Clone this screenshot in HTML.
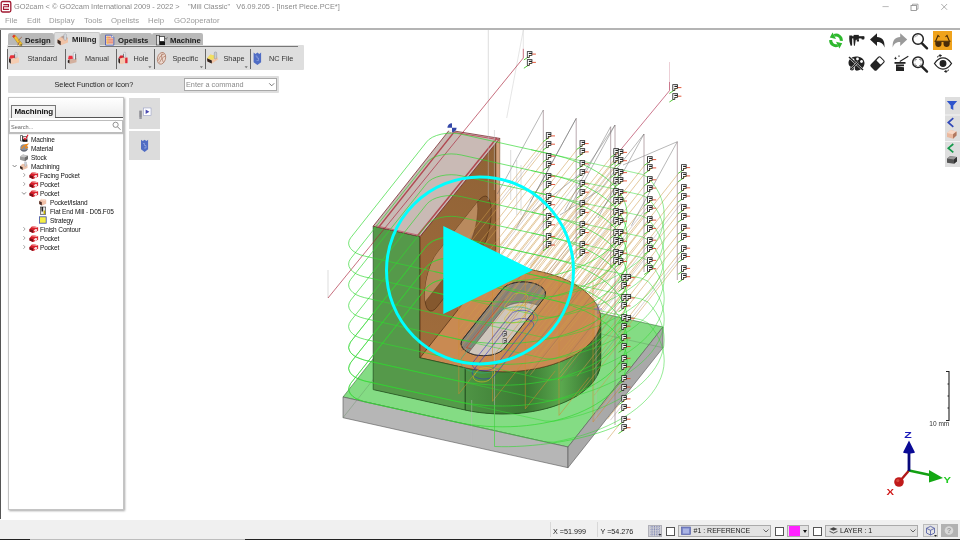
<!DOCTYPE html>
<html><head><meta charset="utf-8"><title>GO2cam</title>
<style>
*{box-sizing:border-box;margin:0;padding:0}
html,body{width:960px;height:540px;overflow:hidden;background:#fff;font-family:"Liberation Sans","DejaVu Sans",sans-serif;}
.abs{position:absolute}
#title{position:absolute;left:14px;top:2px;font-size:7.4px;color:#8a8a8a;white-space:pre;letter-spacing:0px}
#menu span{position:absolute;top:16px;font-size:7.8px;color:#9a9a9a}
#topline{position:absolute;left:0;top:28px;width:960px;height:2px;background:#b4b4b4}
#leftline{position:absolute;left:0;top:30px;width:1px;height:489px;background:#555}
.tab{position:absolute;top:33px;height:13px;background:#b9b9b9;font-weight:bold;font-size:7.7px;color:#1a1a1a;border-radius:2px 2px 0 0}
.tab b{position:absolute;top:3px;font-weight:bold}
#toolbar{position:absolute;left:7px;top:44.5px;width:297px;height:25.5px;background:#dedede;border-radius:1px}
.tsep{position:absolute;top:49px;width:1px;height:20px;background:#666}
.tl{position:absolute;top:54.2px;font-size:7.3px;color:#333}
#prompt{position:absolute;left:8px;top:75.5px;width:271px;height:17.5px;background:#dedede;border-radius:1px}
#cmd{position:absolute;left:183.5px;top:77.5px;width:93px;height:13px;background:#fff;border:1px solid #a8a8a8}
.f text{font:bold 7.4px "Liberation Sans",sans-serif;fill:#fff;stroke:#222;stroke-width:1.7px;paint-order:stroke;stroke-linejoin:miter}

#panel{position:absolute;left:8px;top:97px;width:116px;height:413px;background:#fff;border:1px solid #c4c4c4;box-shadow:1px 1px 2px rgba(0,0,0,.35)}
#phead{position:absolute;left:9px;top:98px;width:114px;height:20px;background:linear-gradient(#fff,#ececec)}
#ptab{position:absolute;left:11px;top:105px;width:45px;height:13px;border:1px solid #777;border-bottom:none;background:#f2f2f2;font-weight:bold;font-size:8px;color:#111;padding:.7px 0 0 2.5px;letter-spacing:-.1px}
#pline{position:absolute;left:55px;top:117px;width:68px;height:1px;background:#555}
#search{position:absolute;left:9px;top:119.5px;width:114px;height:13.5px;border:1px solid #bdbdbd;background:#fff;box-shadow:0 1px 1px rgba(0,0,0,.25)}
#search span{position:absolute;left:1px;top:3px;font-size:5.6px;color:#666}
.ti{position:absolute;font-size:6.5px;letter-spacing:-.12px;color:#111;white-space:nowrap;line-height:9px;height:9px;margin-top:.5px}
.ar{position:absolute;font-size:6px;color:#666}
.sbtn{position:absolute;left:129px;width:31px;background:#dcdcdc}
.st{position:absolute;top:527px;font-size:7.2px;color:#222;white-space:nowrap}
.cb{position:absolute;top:526.5px;width:9px;height:9px;background:#fff;border:1px solid #555}
.combo{position:absolute;top:524.5px;height:12px;background:#e2e2e2;border:1px solid #aaa}
#rside{position:absolute;left:945px;top:97px;width:15px;height:70px;background:#dedede}
#status{position:absolute;left:0;top:520px;width:960px;height:19px;background:#f0f0f0}
</style></head><body><div id="wrap" style="position:absolute;left:0;top:0;width:960px;height:540px;will-change:transform">
<div id="title">GO2cam &lt; © GO2cam International 2009 - 2022 &gt;    "Mill Classic"   V6.09.205 - [Insert Piece.PCE*]</div>
<div id="menu"><span style="left:5px">File</span><span style="left:27px">Edit</span><span style="left:49px">Display</span><span style="left:84px">Tools</span><span style="left:111px">Opelists</span><span style="left:148px">Help</span><span style="left:174px">GO2operator</span></div>
<div id="topline"></div><div id="leftline"></div>
<div class="tab" style="left:8px;width:46px"><b style="left:17px">Design</b></div>
<div class="tab" style="left:54px;width:45.5px;top:32px;height:15px;background:#dedede;z-index:3;border:1px solid #c9c9c9;border-bottom:none"><b style="left:17px;top:2.2px">Milling</b></div>
<div class="tab" style="left:100px;width:52px"><b style="left:18px">Opelists</b></div>
<div class="tab" style="left:152px;width:51px"><b style="left:18px">Machine</b></div>
<div id="toolbar"></div>
<div id="prompt"></div><div id="cmd"></div><div class="tl" style="left:27.500px">Standard</div><div class="tl" style="left:85px">Manual</div><div class="tl" style="left:133.500px">Hole</div><div class="tl" style="left:172.500px">Specific</div><div class="tl" style="left:223.500px">Shape</div><div class="tl" style="left:269px">NC File</div><div class="tl" style="left:54.500px;top:79.800px;color:#222">Select Function or Icon?</div><div class="tl" style="left:186px;top:79.800px;color:#8a8a8a;font-size:7.300px">Enter a command</div><div class="tsep" style="left:7.0px"></div><div class="tsep" style="left:65.0px"></div><div class="tsep" style="left:115.8px"></div><div class="tsep" style="left:153.8px"></div><div class="tsep" style="left:204.8px"></div><div class="tsep" style="left:249.9px"></div><div class="abs" style="left:8px;top:46px;width:290px;height:1px;background:#777"></div>
<div id="panel"></div><div id="phead"></div><div id="ptab">Machining</div><div id="pline"></div><div id="search"><span>Search...</span></div>
<div class="ti" style="left:31px;top:134.5px">Machine</div><div class="ti" style="left:31px;top:143.5px">Material</div><div class="ti" style="left:31px;top:152.5px">Stock</div><div class="ti" style="left:31px;top:161.5px">Machining</div><div class="ti" style="left:40px;top:170.5px">Facing Pocket</div><div class="ti" style="left:40px;top:179.5px">Pocket</div><div class="ti" style="left:40px;top:188.5px">Pocket</div><div class="ti" style="left:50px;top:197.5px">Pocket/Island</div><div class="ti" style="left:50px;top:206.5px">Flat End Mill - D05.F05</div><div class="ti" style="left:50px;top:215.5px">Strategy</div><div class="ti" style="left:40px;top:224.5px">Finish Contour</div><div class="ti" style="left:40px;top:233.5px">Pocket</div><div class="ti" style="left:40px;top:242.5px">Pocket</div>
<div class="sbtn" style="top:98px;height:30.5px"></div><div class="sbtn" style="top:130.5px;height:29.5px"></div>
<div id="rside"></div>
<svg id="scene" class="abs" style="left:0;top:0" width="960" height="540" viewBox="0 0 960 540">
<polygon points="438.0,277.0 343.0,397.0 568.0,447.0 663.0,327.0" fill="#84dc84" stroke="#3c6e3c" stroke-width="0.6" />
<polygon points="343.0,397.0 568.0,447.0 568.0,467.7 343.0,417.7" fill="#b6b6b6" stroke="#555" stroke-width="0.6" />
<polygon points="568.0,447.0 663.0,327.0 663.0,347.7 568.0,467.7" fill="#a9a9a9" stroke="#555" stroke-width="0.6" />
<path d="M343.0 417.7 L438.0 297.7 L663.0 347.7" fill="none" stroke="#5c8a5c" stroke-width="0.5" stroke-opacity="0.7" />
<path d="M438.0 297.7 L438.0 277.0" fill="none" stroke="#5c8a5c" stroke-width="0.5" stroke-opacity="0.7" />
<g fill="#3f8236" stroke="none">
<polygon points="465.0,410.0 472.2,411.4 479.5,412.5 487.1,413.3 494.7,413.8 502.3,414.0 510.0,413.8 517.6,413.4 525.2,412.6 532.6,411.5 539.8,410.1 546.8,408.4 553.5,406.4 559.9,404.1 565.9,401.6 571.6,398.8 576.9,395.9 581.6,392.7 585.9,389.3 589.7,385.7 593.0,382.0 595.7,378.2 597.8,374.2 599.4,370.2 600.3,366.2 600.7,362.1 600.4,358.0 599.6,354.0 598.1,350.0 596.1,346.0 593.5,342.2 590.3,338.5 586.6,334.9 582.4,331.5 577.7,328.3 572.5,325.3 567.0,322.5 561.0,320.0 554.6,317.7 547.9,315.7 541.0,314.0 451.0,294.0 375.0,390.0" fill="#3f8236" stroke="none" stroke-width="0.6" />
<polygon points="465.0,410.0 472.2,411.4 472.2,369.2 465.0,367.8" fill="#3f8236" stroke="#3f8236" stroke-width="0.4" />
<polygon points="472.2,411.4 479.5,412.5 479.5,370.4 472.2,369.2" fill="#3f8236" stroke="#3f8236" stroke-width="0.4" />
<polygon points="479.5,412.5 487.1,413.3 487.1,371.2 479.5,370.4" fill="#3f8236" stroke="#3f8236" stroke-width="0.4" />
<polygon points="487.1,413.3 494.7,413.8 494.7,371.6 487.1,371.2" fill="#3f8236" stroke="#3f8236" stroke-width="0.4" />
<polygon points="494.7,413.8 502.3,414.0 502.3,371.8 494.7,371.6" fill="#3f8236" stroke="#3f8236" stroke-width="0.4" />
<polygon points="502.3,414.0 510.0,413.8 510.0,371.7 502.3,371.8" fill="#3f8236" stroke="#3f8236" stroke-width="0.4" />
<polygon points="510.0,413.8 517.6,413.4 517.6,371.2 510.0,371.7" fill="#3f8236" stroke="#3f8236" stroke-width="0.4" />
<polygon points="517.6,413.4 525.2,412.6 525.2,370.4 517.6,371.2" fill="#3f8236" stroke="#3f8236" stroke-width="0.4" />
<polygon points="525.2,412.6 532.6,411.5 532.6,369.3 525.2,370.4" fill="#3f8236" stroke="#3f8236" stroke-width="0.4" />
<polygon points="532.6,411.5 539.8,410.1 539.8,367.9 532.6,369.3" fill="#3f8236" stroke="#3f8236" stroke-width="0.4" />
<polygon points="539.8,410.1 546.8,408.4 546.8,366.2 539.8,367.9" fill="#3f8236" stroke="#3f8236" stroke-width="0.4" />
<polygon points="546.8,408.4 553.5,406.4 553.5,364.2 546.8,366.2" fill="#3f8236" stroke="#3f8236" stroke-width="0.4" />
<polygon points="553.5,406.4 559.9,404.1 559.9,361.9 553.5,364.2" fill="#3f8236" stroke="#3f8236" stroke-width="0.4" />
<polygon points="559.9,404.1 565.9,401.6 565.9,359.4 559.9,361.9" fill="#3f8236" stroke="#3f8236" stroke-width="0.4" />
<polygon points="565.9,401.6 571.6,398.8 571.6,356.7 565.9,359.4" fill="#3f8236" stroke="#3f8236" stroke-width="0.4" />
<polygon points="571.6,398.8 576.9,395.9 576.9,353.7 571.6,356.7" fill="#3f8236" stroke="#3f8236" stroke-width="0.4" />
<polygon points="576.9,395.9 581.6,392.7 581.6,350.5 576.9,353.7" fill="#3f8236" stroke="#3f8236" stroke-width="0.4" />
<polygon points="581.6,392.7 585.9,389.3 585.9,347.1 581.6,350.5" fill="#3f8236" stroke="#3f8236" stroke-width="0.4" />
<polygon points="585.9,389.3 589.7,385.7 589.7,343.5 585.9,347.1" fill="#3f8236" stroke="#3f8236" stroke-width="0.4" />
<polygon points="589.7,385.7 593.0,382.0 593.0,339.8 589.7,343.5" fill="#3f8236" stroke="#3f8236" stroke-width="0.4" />
<polygon points="593.0,382.0 595.7,378.2 595.7,336.0 593.0,339.8" fill="#3f8236" stroke="#3f8236" stroke-width="0.4" />
<polygon points="595.7,378.2 597.8,374.2 597.8,332.1 595.7,336.0" fill="#3f8236" stroke="#3f8236" stroke-width="0.4" />
<polygon points="597.8,374.2 599.4,370.2 599.4,328.1 597.8,332.1" fill="#3f8236" stroke="#3f8236" stroke-width="0.4" />
<polygon points="599.4,370.2 600.3,366.2 600.3,324.0 599.4,328.1" fill="#3f8236" stroke="#3f8236" stroke-width="0.4" />
<polygon points="600.3,366.2 600.7,362.1 600.7,319.9 600.3,324.0" fill="#3f8236" stroke="#3f8236" stroke-width="0.4" />
<polygon points="600.7,362.1 600.4,358.0 600.4,315.8 600.7,319.9" fill="#3f8236" stroke="#3f8236" stroke-width="0.4" />
<polygon points="600.4,358.0 599.6,354.0 599.6,311.8 600.4,315.8" fill="#3f8236" stroke="#3f8236" stroke-width="0.4" />
<polygon points="599.6,354.0 598.1,350.0 598.1,307.8 599.6,311.8" fill="#3f8236" stroke="#3f8236" stroke-width="0.4" />
<polygon points="598.1,350.0 596.1,346.0 596.1,303.8 598.1,307.8" fill="#3f8236" stroke="#3f8236" stroke-width="0.4" />
<polygon points="596.1,346.0 593.5,342.2 593.5,300.0 596.1,303.8" fill="#3f8236" stroke="#3f8236" stroke-width="0.4" />
<polygon points="593.5,342.2 590.3,338.5 590.3,296.3 593.5,300.0" fill="#3f8236" stroke="#3f8236" stroke-width="0.4" />
<polygon points="590.3,338.5 586.6,334.9 586.6,292.7 590.3,296.3" fill="#3f8236" stroke="#3f8236" stroke-width="0.4" />
<polygon points="586.6,334.9 582.4,331.5 582.4,289.3 586.6,292.7" fill="#3f8236" stroke="#3f8236" stroke-width="0.4" />
<polygon points="582.4,331.5 577.7,328.3 577.7,286.1 582.4,289.3" fill="#3f8236" stroke="#3f8236" stroke-width="0.4" />
<polygon points="577.7,328.3 572.5,325.3 572.5,283.1 577.7,286.1" fill="#3f8236" stroke="#3f8236" stroke-width="0.4" />
<polygon points="572.5,325.3 567.0,322.5 567.0,280.3 572.5,283.1" fill="#3f8236" stroke="#3f8236" stroke-width="0.4" />
<polygon points="567.0,322.5 561.0,320.0 561.0,277.8 567.0,280.3" fill="#3f8236" stroke="#3f8236" stroke-width="0.4" />
<polygon points="561.0,320.0 554.6,317.7 554.6,275.5 561.0,277.8" fill="#3f8236" stroke="#3f8236" stroke-width="0.4" />
<polygon points="554.6,317.7 547.9,315.7 547.9,273.5 554.6,275.5" fill="#3f8236" stroke="#3f8236" stroke-width="0.4" />
<polygon points="547.9,315.7 541.0,314.0 541.0,271.8 547.9,273.5" fill="#3f8236" stroke="#3f8236" stroke-width="0.4" />
<polygon points="541.0,314.0 451.0,294.0 451.0,251.8 541.0,271.8" fill="#3f8236" stroke="#3f8236" stroke-width="0.4" />
<polygon points="451.0,294.0 375.0,390.0 375.0,347.8 451.0,251.8" fill="#3f8236" stroke="#3f8236" stroke-width="0.4" />
</g>
<polygon points="375.0,390.0 465.0,410.0 465.0,367.8 375.0,347.8" fill="#55994a" stroke="none" stroke-width="0.6" />
<defs><linearGradient id="cyl" gradientUnits="userSpaceOnUse" x1="465" y1="0" x2="603" y2="0"><stop offset="0" stop-color="#4f9445"/><stop offset="0.45" stop-color="#3a7a32"/><stop offset="0.7" stop-color="#5aa84e"/><stop offset="1" stop-color="#2f6a2a"/></linearGradient></defs>
<polygon points="465.0,367.8 472.2,369.2 479.5,370.4 487.1,371.2 494.7,371.6 502.3,371.8 510.0,371.7 517.6,371.2 525.2,370.4 532.6,369.3 539.8,367.9 546.8,366.2 553.5,364.2 559.9,361.9 565.9,359.4 571.6,356.7 576.9,353.7 581.6,350.5 585.9,347.1 589.7,343.5 593.0,339.8 595.7,336.0 597.8,332.1 599.4,328.1 600.3,324.0 600.7,319.9 600.7,362.1 600.3,366.2 599.4,370.2 597.8,374.2 595.7,378.2 593.0,382.0 589.7,385.7 585.9,389.3 581.6,392.7 576.9,395.9 571.6,398.8 565.9,401.6 559.9,404.1 553.5,406.4 546.8,408.4 539.8,410.1 532.6,411.5 525.2,412.6 517.6,413.4 510.0,413.8 502.3,414.0 494.7,413.8 487.1,413.3 479.5,412.5 472.2,411.4 465.0,410.0" fill="url(#cyl)" stroke="#1f4a1c" stroke-width="0.7" />
<path d="M465.0 410.0 L465.0 367.8" fill="none" stroke="#1f4a1c" stroke-width="0.7" />
<polygon points="465.0,367.8 472.2,369.2 479.5,370.4 487.1,371.2 494.7,371.6 502.3,371.8 510.0,371.7 517.6,371.2 525.2,370.4 532.6,369.3 539.8,367.9 546.8,366.2 553.5,364.2 559.9,361.9 565.9,359.4 571.6,356.7 576.9,353.7 581.6,350.5 585.9,347.1 589.7,343.5 593.0,339.8 595.7,336.0 597.8,332.1 599.4,328.1 600.3,324.0 600.7,319.9 600.4,315.8 599.6,311.8 598.1,307.8 596.1,303.8 593.5,300.0 590.3,296.3 586.6,292.7 582.4,289.3 577.7,286.1 572.5,283.1 567.0,280.3 561.0,277.8 554.6,275.5 547.9,273.5 541.0,271.8 451.0,251.8 375.0,347.8" fill="#c98a52" stroke="#5a3a1a" stroke-width="0.7" />
<clipPath id="slotclip"><polygon points="462.9,339.1 461.5,341.4 461.1,343.7 461.5,346.0 462.7,348.3 464.8,350.3 467.6,352.2 470.9,353.6 474.8,354.8 479.0,355.4 483.4,355.7 487.8,355.4 492.0,354.8 495.9,353.7 499.3,352.2 502.1,350.4 504.2,348.3 543.8,298.4 545.1,296.2 545.5,293.8 545.1,291.5 543.9,289.2 541.8,287.2 539.1,285.4 535.7,283.9 531.8,282.8 527.6,282.1 523.2,281.8 518.8,282.1 514.6,282.7 510.7,283.8 507.3,285.3 504.5,287.1 502.4,289.2"/></clipPath>
<polygon points="462.9,339.1 461.5,341.4 461.1,343.7 461.5,346.0 462.7,348.3 464.8,350.3 467.6,352.2 470.9,353.6 474.8,354.8 479.0,355.4 483.4,355.7 487.8,355.4 492.0,354.8 495.9,353.7 499.3,352.2 502.1,350.4 504.2,348.3 543.8,298.4 545.1,296.2 545.5,293.8 545.1,291.5 543.9,289.2 541.8,287.2 539.1,285.4 535.7,283.9 531.8,282.8 527.6,282.1 523.2,281.8 518.8,282.1 514.6,282.7 510.7,283.8 507.3,285.3 504.5,287.1 502.4,289.2" fill="#8c8478" stroke="#333" stroke-width="0.8" />
<g clip-path="url(#slotclip)">
<polygon points="462.9,359.8 461.5,362.0 461.1,364.4 461.5,366.7 462.7,368.9 464.8,371.0 467.6,372.8 470.9,374.3 474.8,375.4 479.0,376.1 483.4,376.4 487.8,376.1 492.0,375.5 495.9,374.4 499.3,372.9 502.1,371.1 504.2,369.0 543.8,319.1 545.1,316.8 545.5,314.5 545.1,312.2 543.9,309.9 541.8,307.8 539.1,306.0 535.7,304.5 531.8,303.4 527.6,302.7 523.2,302.5 518.8,302.7 514.6,303.4 510.7,304.5 507.3,306.0 504.5,307.8 502.4,309.9" fill="#cfc6bc" stroke="#555" stroke-width="0.6" />
</g>
<polygon points="462.9,339.1 461.5,341.4 461.1,343.7 461.5,346.0 462.7,348.3 464.8,350.3 467.6,352.2 470.9,353.6 474.8,354.8 479.0,355.4 483.4,355.7 487.8,355.4 492.0,354.8 495.9,353.7 499.3,352.2 502.1,350.4 504.2,348.3 543.8,298.4 545.1,296.2 545.5,293.8 545.1,291.5 543.9,289.2 541.8,287.2 539.1,285.4 535.7,283.9 531.8,282.8 527.6,282.1 523.2,281.8 518.8,282.1 514.6,282.7 510.7,283.8 507.3,285.3 504.5,287.1 502.4,289.2" fill="none" stroke="#2a2a2a" stroke-width="0.9" />
<polygon points="373.2,389.6 465.0,410.0 465.0,367.8 420.0,357.8 420.0,236.6 373.2,226.2" fill="#55994a" stroke="#1f4a1c" stroke-width="0.7" />
<defs><linearGradient id="wallg" gradientUnits="userSpaceOnUse" x1="500" y1="140" x2="420" y2="350"><stop offset="0" stop-color="#8f6236"/><stop offset="1" stop-color="#a06c3c"/></linearGradient></defs>
<polygon points="420.0,357.8 496.0,261.8 496.0,140.6 420.0,236.6" fill="url(#wallg)" stroke="#4a2a10" stroke-width="0.7" />
<clipPath id="pkclip"><polygon points="437.1,306.8 434.7,309.4 432.4,310.8 430.2,311.0 428.4,310.0 426.8,307.9 425.7,304.7 425.0,300.5 424.8,295.6 425.0,290.0 425.7,284.1 426.8,278.0 428.4,272.0 430.2,266.3 432.4,261.1 434.7,256.6 437.1,253.1 478.9,200.3 481.3,197.8 483.6,196.4 485.8,196.1 487.6,197.1 489.2,199.3 490.3,202.5 491.0,206.6 491.2,211.6 491.0,217.1 490.3,223.0 489.2,229.1 487.6,235.1 485.8,240.8 483.6,246.0 481.3,250.5 478.9,254.0"/></clipPath>
<polygon points="437.1,306.8 434.7,309.4 432.4,310.8 430.2,311.0 428.4,310.0 426.8,307.9 425.7,304.7 425.0,300.5 424.8,295.6 425.0,290.0 425.7,284.1 426.8,278.0 428.4,272.0 430.2,266.3 432.4,261.1 434.7,256.6 437.1,253.1 478.9,200.3 481.3,197.8 483.6,196.4 485.8,196.1 487.6,197.1 489.2,199.3 490.3,202.5 491.0,206.6 491.2,211.6 491.0,217.1 490.3,223.0 489.2,229.1 487.6,235.1 485.8,240.8 483.6,246.0 481.3,250.5 478.9,254.0" fill="#85582e" stroke="#4a2a10" stroke-width="0.6" />
<g clip-path="url(#pkclip)"><polygon points="423.6,303.8 421.2,306.4 418.9,307.8 416.7,308.0 414.9,307.0 413.3,304.9 412.2,301.7 411.5,297.5 411.2,292.6 411.5,287.0 412.2,281.1 413.3,275.0 414.9,269.0 416.7,263.3 418.9,258.1 421.2,253.6 423.6,250.1 465.4,197.3 467.8,194.8 470.1,193.4 472.3,193.1 474.1,194.1 475.7,196.3 476.8,199.5 477.5,203.6 477.8,208.6 477.5,214.1 476.8,220.0 475.7,226.1 474.1,232.1 472.3,237.8 470.1,243.0 467.8,247.5 465.4,251.0" fill="#b98a5e" stroke="#6a4020" stroke-width="0.5" /></g>
<polygon points="496.0,261.8 499.5,260.8 499.8,138.4 496.0,140.6" fill="#d3a27e" stroke="#6a4020" stroke-width="0.5" />
<polygon points="373.2,226.2 420.0,236.6 499.8,138.4 449.2,130.2" fill="#c9bab5" stroke="#7a2a30" stroke-width="0.8" />
<path d="M378.6 227.4 L454.6 131.4" fill="none" stroke="#b04850" stroke-width="1.5" />
<path d="M417.3 236.0 L496.8 138.0" fill="none" stroke="#b04850" stroke-width="1.5" />
<path d="M450.1 131.8 L498.7 139.7" fill="none" stroke="#c05868" stroke-width="1.0" />
<path d="M375.8 225.7 L420.8 235.7" fill="none" stroke="#c05868" stroke-width="0.8" />
<path d="M543.3 141.8 l-84.9 107.3 M543.3 150.1 l-84.9 107.3 M543.3 162.0 l-84.9 107.3 M543.3 170.3 l-84.9 107.3 M543.3 182.1 l-84.9 107.3 M543.3 190.4 l-84.9 107.3 M543.3 202.2 l-84.9 107.3 M543.3 210.6 l-84.9 107.3 M543.3 222.4 l-84.9 107.3 M543.3 230.7 l-84.9 107.3 M543.3 242.6 l-84.9 107.3 M543.3 250.9 l-84.9 107.3 M577.0 149.5 l-84.9 107.3 M577.0 157.8 l-84.9 107.3 M577.0 169.7 l-84.9 107.3 M577.0 178.0 l-84.9 107.3 M577.0 189.8 l-84.9 107.3 M577.0 198.1 l-84.9 107.3 M577.0 209.9 l-84.9 107.3 M577.0 218.2 l-84.9 107.3 M577.0 230.1 l-84.9 107.3 M577.0 238.4 l-84.9 107.3 M577.0 250.2 l-84.9 107.3 M577.0 258.6 l-84.9 107.3 M610.8 157.5 l-84.9 107.3 M610.8 165.8 l-84.9 107.3 M610.8 177.7 l-84.9 107.3 M610.8 186.0 l-84.9 107.3 M610.8 197.8 l-84.9 107.3 M610.8 206.1 l-84.9 107.3 M610.8 217.9 l-84.9 107.3 M610.8 226.2 l-84.9 107.3 M610.8 238.1 l-84.9 107.3 M610.8 246.4 l-84.9 107.3 M610.8 258.2 l-84.9 107.3 M610.8 266.6 l-84.9 107.3 M644.5 165.5 l-84.9 107.3 M644.5 173.8 l-84.9 107.3 M644.5 185.7 l-84.9 107.3 M644.5 194.0 l-84.9 107.3 M644.5 205.8 l-84.9 107.3 M644.5 214.1 l-84.9 107.3 M644.5 225.9 l-84.9 107.3 M644.5 234.2 l-84.9 107.3 M644.5 246.1 l-84.9 107.3 M644.5 254.4 l-84.9 107.3 M644.5 266.2 l-84.9 107.3 M678.4 173.5 l-84.9 107.3 M678.4 181.8 l-84.9 107.3 M678.4 193.7 l-84.9 107.3 M678.4 202.0 l-84.9 107.3 M678.4 213.8 l-84.9 107.3 M678.4 222.1 l-84.9 107.3 M678.4 233.9 l-84.9 107.3 M678.4 242.2 l-84.9 107.3 M678.4 254.1 l-84.9 107.3 M678.4 262.4 l-84.9 107.3 M615.3 158.3 l-84.9 107.3 M615.3 166.6 l-84.9 107.3 M615.3 178.5 l-84.9 107.3 M615.3 186.8 l-84.9 107.3 M615.3 198.6 l-84.9 107.3 M615.3 206.9 l-84.9 107.3 M615.3 218.8 l-84.9 107.3 M615.3 227.0 l-84.9 107.3 M615.3 238.9 l-84.9 107.3 M615.3 247.2 l-84.9 107.3 M615.3 259.1 l-84.9 107.3 M615.3 267.4 l-84.9 107.3 M618.8 283.0 l-60.8 76.8 M618.8 303.3 l-60.8 76.8 M618.8 323.6 l-41.8 52.8 M618.8 343.9 l-41.8 52.8 M618.8 364.2 l-24.7 31.2 M618.8 384.5 l-24.7 31.2 M618.8 404.8 l-11.4 14.4 M618.8 425.1 l-11.4 14.4" fill="none" stroke="#cc9a4a" stroke-width="0.6" stroke-opacity="0.9"/>
<path d="M458.8 253.8 V393.8 l30 -38 M492.5 261.3 V401.3 l30 -38 M525.3 268.8 V408.8 l30 -38 M559.0 275.4 V415.4 l30 -38 M593.0 282.0 V422.0 l30 -38" fill="none" stroke="#d08a30" stroke-width="0.6" stroke-opacity="0.9"/>
<path d="M543.3 141.8 l-84.9 107.3 M543.3 190.4 l-84.9 107.3 M543.3 242.6 l-84.9 107.3 M577.0 178.0 l-84.9 107.3 M577.0 230.1 l-84.9 107.3 M610.8 165.8 l-84.9 107.3 M610.8 217.9 l-84.9 107.3 M610.8 266.6 l-84.9 107.3 M644.5 205.8 l-84.9 107.3 M644.5 254.4 l-84.9 107.3 M678.4 202.0 l-84.9 107.3 M678.4 254.1 l-84.9 107.3 M615.3 186.8 l-84.9 107.3 M615.3 238.9 l-84.9 107.3 M618.8 303.3 l-60.8 76.8 M618.8 404.8 l-11.4 14.4" fill="none" stroke="#7a5a5a" stroke-width="0.5" stroke-opacity="0.55" transform="translate(3,1)"/>
<path d="M543.3 250.0 V110.0 M576.2 258.0 V118.4 M610.7 268.0 V126.7 M615.0 425.0 V125.0 M644.0 272.0 V134.0 M677.3 280.0 V141.7" fill="none" stroke="#8a7078" stroke-width="0.7" stroke-opacity="0.85"/>
<path d="M543.3 110.0 l-46 84 M576.2 118.4 l-46 84 M610.7 126.7 l-46 84 M615.0 125.0 l-46 84 M644.0 134.0 l-46 84 M677.3 141.7 l-46 84 M677.3 141.7 L623 165 M644 134 L600 190 L560 215 M615 125 L585 170 L532 212 M576.2 118.4 l-60 110" fill="none" stroke="#666" stroke-width="0.55" stroke-opacity="0.85"/>
<path d="M488.3 30V200 M494.4 130V190 M510.7 150V200 M516.7 160V215 M521 165V215 M328 270V298 M471.7 400V443 M494.5 330V447 M596 300V420" fill="none" stroke="#bbb" stroke-width="0.5"/>
<path d="M523.3 30V48.8M523.3 30L506.7 118" fill="none" stroke="#ccc" stroke-width="0.5"/><path d="M523.3 48.8 V58 L328 298" fill="none" stroke="#a82038" stroke-width="0.65"/>
<path d="M669.5 62V82" fill="none" stroke="#e0b0bc" stroke-width="0.6"/><path d="M669.5 82 V90.7 L615 156.6" fill="none" stroke="#b03050" stroke-width="0.65"/>
<path d="M454.7 276.1 L462.3 277.7 L470.1 278.9 L478.0 279.9 L486.0 280.6 L494.0 281.1 L502.2 281.2 L510.3 281.1 L518.4 280.7 L526.4 280.0 L534.3 279.0 L542.1 277.8 L549.7 276.2 L557.1 274.5 L564.3 272.4 L571.2 270.2 L577.9 267.6 L584.2 264.9 L590.1 262.0 L595.7 258.8 L600.9 255.5 L605.7 252.0 L610.0 248.3 L613.9 244.5 L617.3 240.6 L620.2 236.5 L622.6 232.4 L624.5 228.2 L625.9 223.9 L626.7 219.6 L627.1 215.3 L626.9 211.0 L626.1 206.7 L624.8 202.4 L623.1 198.2 L620.8 194.1 L617.9 190.0 L614.6 186.1 L610.9 182.3 L606.6 178.6 L601.9 175.1 L596.8 171.7 L591.3 168.6 L585.4 165.6 L579.2 162.9 L572.6 160.3 L565.8 158.0 L558.6 156.0 L551.3 154.2 L461.3 134.2 L456.3 133.4 L451.2 133.1 L446.0 133.4 L441.1 134.2 L436.5 135.5 L432.5 137.2 L429.2 139.3 L426.7 141.8 L350.7 237.8 L349.2 240.4 L348.6 243.1 L349.1 245.9 L350.6 248.5 L353.0 250.9 L356.2 253.1 L360.2 254.8 L364.7 256.1 Z M454.7 296.9 L462.3 298.5 L470.1 299.7 L478.0 300.7 L486.0 301.4 L494.0 301.9 L502.2 302.0 L510.3 301.9 L518.4 301.5 L526.4 300.8 L534.3 299.8 L542.1 298.6 L549.7 297.0 L557.1 295.3 L564.3 293.2 L571.2 291.0 L577.9 288.5 L584.2 285.7 L590.1 282.8 L595.7 279.6 L600.9 276.3 L605.7 272.8 L610.0 269.1 L613.9 265.3 L617.3 261.4 L620.2 257.3 L622.6 253.2 L624.5 249.0 L625.9 244.7 L626.7 240.4 L627.1 236.1 L626.9 231.8 L626.1 227.5 L624.8 223.2 L623.1 219.0 L620.8 214.9 L617.9 210.8 L614.6 206.9 L610.9 203.1 L606.6 199.4 L601.9 195.9 L596.8 192.5 L591.3 189.4 L585.4 186.4 L579.2 183.7 L572.6 181.1 L565.8 178.9 L558.6 176.8 L551.3 175.0 L461.3 155.0 L456.3 154.2 L451.2 153.9 L446.0 154.2 L441.1 155.0 L436.5 156.3 L432.5 158.0 L429.2 160.2 L426.7 162.6 L350.7 258.6 L349.2 261.2 L348.6 263.9 L349.1 266.7 L350.6 269.3 L353.0 271.8 L356.2 273.9 L360.2 275.6 L364.7 276.9 Z M454.7 317.7 L462.3 319.3 L470.1 320.5 L478.0 321.5 L486.0 322.2 L494.0 322.7 L502.2 322.8 L510.3 322.7 L518.4 322.3 L526.4 321.6 L534.3 320.6 L542.1 319.4 L549.7 317.8 L557.1 316.1 L564.3 314.0 L571.2 311.8 L577.9 309.3 L584.2 306.5 L590.1 303.6 L595.7 300.4 L600.9 297.1 L605.7 293.6 L610.0 289.9 L613.9 286.1 L617.3 282.2 L620.2 278.1 L622.6 274.0 L624.5 269.8 L625.9 265.5 L626.7 261.2 L627.1 256.9 L626.9 252.6 L626.1 248.3 L624.8 244.0 L623.1 239.8 L620.8 235.7 L617.9 231.6 L614.6 227.7 L610.9 223.9 L606.6 220.2 L601.9 216.7 L596.8 213.3 L591.3 210.2 L585.4 207.2 L579.2 204.5 L572.6 201.9 L565.8 199.7 L558.6 197.6 L551.3 195.8 L461.3 175.8 L456.3 175.0 L451.2 174.7 L446.0 175.0 L441.1 175.8 L436.5 177.1 L432.5 178.8 L429.2 181.0 L426.7 183.4 L350.7 279.4 L349.2 282.0 L348.6 284.8 L349.1 287.5 L350.6 290.1 L353.0 292.6 L356.2 294.7 L360.2 296.4 L364.7 297.7 Z M454.7 338.5 L462.3 340.1 L470.1 341.3 L478.0 342.3 L486.0 343.0 L494.0 343.5 L502.2 343.6 L510.3 343.5 L518.4 343.1 L526.4 342.4 L534.3 341.4 L542.1 340.2 L549.7 338.6 L557.1 336.9 L564.3 334.8 L571.2 332.6 L577.9 330.1 L584.2 327.3 L590.1 324.4 L595.7 321.2 L600.9 317.9 L605.7 314.4 L610.0 310.7 L613.9 306.9 L617.3 303.0 L620.2 298.9 L622.6 294.8 L624.5 290.6 L625.9 286.3 L626.7 282.0 L627.1 277.7 L626.9 273.4 L626.1 269.1 L624.8 264.8 L623.1 260.6 L620.8 256.5 L617.9 252.4 L614.6 248.5 L610.9 244.7 L606.6 241.0 L601.9 237.5 L596.8 234.1 L591.3 231.0 L585.4 228.0 L579.2 225.3 L572.6 222.8 L565.8 220.5 L558.6 218.4 L551.3 216.6 L461.3 196.6 L456.3 195.8 L451.2 195.5 L446.0 195.8 L441.1 196.6 L436.5 197.9 L432.5 199.6 L429.2 201.8 L426.7 204.2 L350.7 300.2 L349.2 302.8 L348.6 305.6 L349.1 308.3 L350.6 310.9 L353.0 313.4 L356.2 315.5 L360.2 317.2 L364.7 318.5 Z M454.7 359.3 L462.3 360.9 L470.1 362.1 L478.0 363.1 L486.0 363.8 L494.0 364.3 L502.2 364.4 L510.3 364.3 L518.4 363.9 L526.4 363.2 L534.3 362.2 L542.1 361.0 L549.7 359.5 L557.1 357.7 L564.3 355.6 L571.2 353.4 L577.9 350.9 L584.2 348.1 L590.1 345.2 L595.7 342.0 L600.9 338.7 L605.7 335.2 L610.0 331.5 L613.9 327.7 L617.3 323.8 L620.2 319.7 L622.6 315.6 L624.5 311.4 L625.9 307.1 L626.7 302.8 L627.1 298.5 L626.9 294.2 L626.1 289.9 L624.8 285.6 L623.1 281.4 L620.8 277.3 L617.9 273.2 L614.6 269.3 L610.9 265.5 L606.6 261.8 L601.9 258.3 L596.8 254.9 L591.3 251.8 L585.4 248.8 L579.2 246.1 L572.6 243.6 L565.8 241.3 L558.6 239.2 L551.3 237.4 L461.3 217.4 L456.3 216.6 L451.2 216.3 L446.0 216.6 L441.1 217.4 L436.5 218.7 L432.5 220.4 L429.2 222.6 L426.7 225.0 L350.7 321.0 L349.2 323.6 L348.6 326.4 L349.1 329.1 L350.6 331.7 L353.0 334.2 L356.2 336.3 L360.2 338.0 L364.7 339.3 Z M454.7 380.2 L462.3 381.7 L470.1 382.9 L478.0 383.9 L486.0 384.6 L494.0 385.1 L502.2 385.2 L510.3 385.1 L518.4 384.7 L526.4 384.0 L534.3 383.0 L542.1 381.8 L549.7 380.3 L557.1 378.5 L564.3 376.5 L571.2 374.2 L577.9 371.7 L584.2 368.9 L590.1 366.0 L595.7 362.8 L600.9 359.5 L605.7 356.0 L610.0 352.3 L613.9 348.5 L617.3 344.6 L620.2 340.6 L622.6 336.4 L624.5 332.2 L625.9 327.9 L626.7 323.6 L627.1 319.3 L626.9 315.0 L626.1 310.7 L624.8 306.4 L623.1 302.2 L620.8 298.1 L617.9 294.0 L614.6 290.1 L610.9 286.3 L606.6 282.6 L601.9 279.1 L596.8 275.8 L591.3 272.6 L585.4 269.6 L579.2 266.9 L572.6 264.4 L565.8 262.1 L558.6 260.0 L551.3 258.2 L461.3 238.2 L456.3 237.4 L451.2 237.2 L446.0 237.4 L441.1 238.2 L436.5 239.5 L432.5 241.2 L429.2 243.4 L426.7 245.8 L350.7 341.8 L349.2 344.4 L348.6 347.2 L349.1 349.9 L350.6 352.5 L353.0 355.0 L356.2 357.1 L360.2 358.8 L364.7 360.2 Z M454.7 401.0 L462.3 402.5 L470.1 403.8 L478.0 404.7 L486.0 405.5 L494.0 405.9 L502.2 406.0 L510.3 405.9 L518.4 405.5 L526.4 404.8 L534.3 403.8 L542.1 402.6 L549.7 401.1 L557.1 399.3 L564.3 397.3 L571.2 395.0 L577.9 392.5 L584.2 389.7 L590.1 386.8 L595.7 383.6 L600.9 380.3 L605.7 376.8 L610.0 373.1 L613.9 369.3 L617.3 365.4 L620.2 361.4 L622.6 357.2 L624.5 353.0 L625.9 348.8 L626.7 344.5 L627.1 340.1 L626.9 335.8 L626.1 331.5 L624.8 327.2 L623.1 323.0 L620.8 318.9 L617.9 314.9 L614.6 310.9 L610.9 307.1 L606.6 303.4 L601.9 299.9 L596.8 296.6 L591.3 293.4 L585.4 290.4 L579.2 287.7 L572.6 285.2 L565.8 282.9 L558.6 280.8 L551.3 279.0 L461.3 259.0 L456.3 258.2 L451.2 258.0 L446.0 258.2 L441.1 259.0 L436.5 260.3 L432.5 262.0 L429.2 264.2 L426.7 266.6 L350.7 362.6 L349.2 365.2 L348.6 368.0 L349.1 370.7 L350.6 373.3 L353.0 375.8 L356.2 377.9 L360.2 379.7 L364.7 381.0 Z M454.7 421.8 L462.3 423.3 L470.1 424.6 L478.0 425.5 L486.0 426.3 L494.0 426.7 L502.2 426.8 L510.3 426.7 L518.4 426.3 L526.4 425.6 L534.3 424.6 L542.1 423.4 L549.7 421.9 L557.1 420.1 L564.3 418.1 L571.2 415.8 L577.9 413.3 L584.2 410.5 L590.1 407.6 L595.7 404.4 L600.9 401.1 L605.7 397.6 L610.0 393.9 L613.9 390.1 L617.3 386.2 L620.2 382.2 L622.6 378.0 L624.5 373.8 L625.9 369.6 L626.7 365.3 L627.1 360.9 L626.9 356.6 L626.1 352.3 L624.8 348.1 L623.1 343.8 L620.8 339.7 L617.9 335.7 L614.6 331.7 L610.9 327.9 L606.6 324.2 L601.9 320.7 L596.8 317.4 L591.3 314.2 L585.4 311.2 L579.2 308.5 L572.6 306.0 L565.8 303.7 L558.6 301.6 L551.3 299.8 L461.3 279.8 L456.3 279.0 L451.2 278.8 L446.0 279.0 L441.1 279.8 L436.5 281.1 L432.5 282.9 L429.2 285.0 L426.7 287.4 L350.7 383.4 L349.2 386.0 L348.6 388.8 L349.1 391.5 L350.6 394.1 L353.0 396.6 L356.2 398.7 L360.2 400.5 L364.7 401.8 Z" fill="none" stroke="#2fd82f" stroke-width="0.7" stroke-opacity="0.95"/>
<path d="M434.5 271.6 L454.7 276.1 L464.5 278.3 L474.1 280.4 L483.7 282.6 L493.2 284.7 L502.5 286.7 L511.6 288.8 L520.4 290.7 L529.0 292.6 L537.2 294.5 L545.1 296.2 L553.8 296.5 L563.7 294.5 L573.3 292.2 L582.6 289.6 L591.6 286.6 L600.3 283.4 L608.5 279.8 L616.2 276.0 L623.5 271.9 L630.2 267.5 L636.4 263.0 L642.0 258.2 L647.1 253.3 L651.5 248.2 L655.3 242.9 L658.4 237.6 L660.9 232.1 L662.7 226.5 L663.8 221.0 L664.2 215.4 L663.9 209.7 L663.0 204.2 L661.3 198.6 L659.0 193.1 L656.0 187.8 L652.3 182.5 L648.1 177.4 L641.7 174.3 L633.8 172.5 L625.5 170.7 L616.9 168.8 L608.1 166.8 L599.0 164.8 L589.7 162.8 L580.2 160.6 L570.6 158.5 L561.0 156.4 L551.3 154.2 L531.0 149.7 M434.5 292.4 L454.7 296.9 L464.5 299.1 L474.1 301.2 L483.7 303.4 L493.2 305.5 L502.5 307.5 L511.6 309.6 L520.4 311.5 L529.0 313.4 L537.2 315.3 L545.1 317.0 L553.8 317.3 L563.7 315.3 L573.3 313.0 L582.6 310.4 L591.6 307.4 L600.3 304.2 L608.5 300.6 L616.2 296.8 L623.5 292.7 L630.2 288.4 L636.4 283.8 L642.0 279.0 L647.1 274.1 L651.5 269.0 L655.3 263.7 L658.4 258.4 L660.9 252.9 L662.7 247.4 L663.8 241.8 L664.2 236.2 L663.9 230.5 L663.0 225.0 L661.3 219.4 L659.0 213.9 L656.0 208.6 L652.3 203.3 L648.1 198.2 L641.7 195.1 L633.8 193.3 L625.5 191.5 L616.9 189.6 L608.1 187.6 L599.0 185.6 L589.7 183.6 L580.2 181.5 L570.6 179.3 L561.0 177.2 L551.3 175.0 L531.0 170.5 M434.5 313.2 L454.7 317.7 L464.5 319.9 L474.1 322.0 L483.7 324.2 L493.2 326.3 L502.5 328.3 L511.6 330.4 L520.4 332.3 L529.0 334.2 L537.2 336.1 L545.1 337.8 L553.8 338.1 L563.7 336.1 L573.3 333.8 L582.6 331.2 L591.6 328.2 L600.3 325.0 L608.5 321.4 L616.2 317.6 L623.5 313.5 L630.2 309.2 L636.4 304.6 L642.0 299.8 L647.1 294.9 L651.5 289.8 L655.3 284.5 L658.4 279.2 L660.9 273.7 L662.7 268.2 L663.8 262.6 L664.2 257.0 L663.9 251.3 L663.0 245.8 L661.3 240.2 L659.0 234.7 L656.0 229.4 L652.3 224.1 L648.1 219.0 L641.7 215.9 L633.8 214.2 L625.5 212.3 L616.9 210.4 L608.1 208.4 L599.0 206.4 L589.7 204.4 L580.2 202.3 L570.6 200.1 L561.0 198.0 L551.3 195.8 L531.0 191.3 M434.5 334.0 L454.7 338.5 L464.5 340.7 L474.1 342.9 L483.7 345.0 L493.2 347.1 L502.5 349.2 L511.6 351.2 L520.4 353.1 L529.0 355.0 L537.2 356.9 L545.1 358.6 L553.8 358.9 L563.7 356.9 L573.3 354.6 L582.6 352.0 L591.6 349.0 L600.3 345.8 L608.5 342.2 L616.2 338.4 L623.5 334.3 L630.2 330.0 L636.4 325.4 L642.0 320.6 L647.1 315.7 L651.5 310.6 L655.3 305.3 L658.4 300.0 L660.9 294.5 L662.7 289.0 L663.8 283.4 L664.2 277.8 L663.9 272.2 L663.0 266.6 L661.3 261.0 L659.0 255.6 L656.0 250.2 L652.3 244.9 L648.1 239.8 L641.7 236.7 L633.8 235.0 L625.5 233.1 L616.9 231.2 L608.1 229.3 L599.0 227.2 L589.7 225.2 L580.2 223.1 L570.6 220.9 L561.0 218.8 L551.3 216.6 L531.0 212.1 M434.5 354.8 L454.7 359.3 L464.5 361.5 L474.1 363.7 L483.7 365.8 L493.2 367.9 L502.5 370.0 L511.6 372.0 L520.4 373.9 L529.0 375.8 L537.2 377.7 L545.1 379.4 L553.8 379.7 L563.7 377.7 L573.3 375.4 L582.6 372.8 L591.6 369.8 L600.3 366.6 L608.5 363.0 L616.2 359.2 L623.5 355.1 L630.2 350.8 L636.4 346.2 L642.0 341.4 L647.1 336.5 L651.5 331.4 L655.3 326.1 L658.4 320.8 L660.9 315.3 L662.7 309.8 L663.8 304.2 L664.2 298.6 L663.9 293.0 L663.0 287.4 L661.3 281.8 L659.0 276.4 L656.0 271.0 L652.3 265.7 L648.1 260.6 L641.7 257.5 L633.8 255.8 L625.5 253.9 L616.9 252.0 L608.1 250.1 L599.0 248.0 L589.7 246.0 L580.2 243.9 L570.6 241.7 L561.0 239.6 L551.3 237.4 L531.0 232.9 M454.7 380.2 L464.5 382.3 L474.1 384.5 L483.7 386.6 L493.2 388.7 L502.5 390.8 L511.6 392.8 L520.4 394.7 L529.0 396.7 L537.2 398.5 L545.1 400.2 L553.8 400.5 L563.7 398.5 L573.3 396.2 L582.6 393.6 L591.6 390.6 L600.3 387.4 L608.5 383.8 L616.2 380.0 L623.5 375.9 L630.2 371.6 L636.4 367.0 L642.0 362.2 L647.1 357.3 L651.5 352.2 L655.3 346.9 L658.4 341.6 L660.9 336.1 L662.7 330.6 L663.8 325.0 L664.2 319.4 L663.9 313.8 L663.0 308.2 L661.3 302.6 L659.0 297.2 L656.0 291.8 L652.3 286.5 L648.1 281.4 L641.7 278.3 L633.8 276.6 L625.5 274.7 L616.9 272.8 L608.1 270.9 L599.0 268.8 L589.7 266.8 L580.2 264.7 L570.6 262.5 L561.0 260.4 L551.3 258.2 L461.3 238.2 L450.0 237.2 L442.1 238.0 L441.1 238.2 L441.1 238.2 L441.1 238.2 L440.1 238.4 L433.4 240.8 L426.7 245.8 L350.7 341.8 L348.6 347.8 L350.2 352.0 L350.6 352.5 L350.6 352.5 L350.6 352.5 L351.0 353.1 L355.4 356.6 L364.7 360.2 L454.7 380.2 M454.7 401.0 L464.5 403.1 L474.1 405.3 L483.7 407.4 L493.2 409.5 L502.5 411.6 L511.6 413.6 L520.4 415.6 L529.0 417.5 L537.2 419.3 L545.1 421.0 L553.8 421.3 L563.7 419.3 L573.3 417.0 L582.6 414.4 L591.6 411.4 L600.3 408.2 L608.5 404.6 L616.2 400.8 L623.5 396.7 L630.2 392.4 L636.4 387.8 L642.0 383.1 L647.1 378.1 L651.5 373.0 L655.3 367.7 L658.4 362.4 L660.9 356.9 L662.7 351.4 L663.8 345.8 L664.2 340.2 L663.9 334.6 L663.0 329.0 L661.3 323.4 L659.0 318.0 L656.0 312.6 L652.3 307.3 L648.1 302.2 L641.7 299.1 L633.8 297.4 L625.5 295.5 L616.9 293.6 L608.1 291.7 L599.0 289.6 L589.7 287.6 L580.2 285.5 L570.6 283.3 L561.0 281.2 L551.3 279.0 L461.3 259.0 L450.0 258.0 L442.1 258.8 L441.1 259.0 L441.1 259.0 L441.1 259.0 L440.1 259.2 L433.4 261.6 L426.7 266.6 L350.7 362.6 L348.6 368.6 L350.2 372.8 L350.6 373.3 L350.6 373.3 L350.6 373.3 L351.0 373.9 L355.4 377.4 L364.7 381.0 L454.7 401.0 M454.7 421.8 L464.5 423.9 L474.1 426.1 L483.7 428.2 L493.2 430.3 L502.5 432.4 L511.6 434.4 L520.4 436.4 L529.0 438.3 L537.2 440.1 L545.1 441.8 L553.8 442.1 L563.7 440.1 L573.3 437.8 L582.6 435.2 L591.6 432.2 L600.3 429.0 L608.5 425.4 L616.2 421.6 L623.5 417.5 L630.2 413.2 L636.4 408.6 L642.0 403.9 L647.1 398.9 L651.5 393.8 L655.3 388.5 L658.4 383.2 L660.9 377.7 L662.7 372.2 L663.8 366.6 L664.2 361.0 L663.9 355.4 L663.0 349.8 L661.3 344.2 L659.0 338.8 L656.0 333.4 L652.3 328.1 L648.1 323.0 L641.7 319.9 L633.8 318.2 L625.5 316.3 L616.9 314.4 L608.1 312.5 L599.0 310.4 L589.7 308.4 L580.2 306.3 L570.6 304.1 L561.0 302.0 L551.3 299.8 L461.3 279.8 L450.0 278.8 L442.1 279.6 L441.1 279.8 L441.1 279.8 L441.1 279.8 L440.1 280.0 L433.4 282.4 L426.7 287.4 L350.7 383.4 L348.6 389.4 L350.2 393.6 L350.6 394.1 L350.6 394.1 L350.6 394.1 L351.0 394.7 L355.4 398.2 L364.7 401.8 L454.7 421.8" fill="none" stroke="#2fd82f" stroke-width="0.6" stroke-opacity="0.85"/>
<path d="" fill="none" stroke="#2fd82f" stroke-width="0.6" stroke-opacity="0.85"/>
<path d="M494.5 405V446.5C530 448 585 441 619 425" fill="none" stroke="#2fd82f" stroke-width="0.6"/>
<path d="M473.2 362.1 L472.5 363.3 L472.3 364.5 L472.5 365.7 L473.1 366.9 L474.2 367.9 L475.7 368.9 L477.4 369.7 L479.4 370.3 L481.6 370.6 L483.9 370.7 L486.2 370.6 L488.4 370.3 L490.4 369.7 L492.2 368.9 L493.7 368.0 L494.8 366.9 L532.8 318.9 L533.5 317.7 L533.7 316.5 L533.5 315.3 L532.9 314.1 L531.8 313.0 L530.3 312.1 L528.6 311.3 L526.6 310.7 L524.4 310.4 L522.1 310.3 L519.8 310.4 L517.6 310.7 L515.6 311.3 L513.8 312.1 L512.3 313.0 L511.2 314.1 Z M473.2 370.4 L472.5 371.5 L472.3 372.8 L472.5 374.0 L473.1 375.1 L474.2 376.2 L475.7 377.2 L477.4 377.9 L479.4 378.5 L481.6 378.9 L483.9 379.0 L486.2 378.9 L488.4 378.5 L490.4 378.0 L492.2 377.2 L493.7 376.2 L494.8 375.2 L532.8 327.2 L533.5 326.0 L533.7 324.8 L533.5 323.6 L532.9 322.4 L531.8 321.3 L530.3 320.4 L528.6 319.6 L526.6 319.0 L524.4 318.6 L522.1 318.5 L519.8 318.6 L517.6 319.0 L515.6 319.6 L513.8 320.3 L512.3 321.3 L511.2 322.4 Z" fill="none" stroke="#3030c0" stroke-width="0.6"/>
<path d="M505.3 305.0 L504.8 305.8 L504.7 306.6 L504.8 307.4 L505.3 308.2 L506.0 308.9 L506.9 309.5 L508.1 310.0 L509.5 310.4 L510.9 310.7 L512.4 310.7 L514.0 310.7 L515.4 310.4 L516.8 310.0 L518.0 309.5 L519.0 308.9 L519.7 308.2 L527.3 298.6 L527.8 297.8 L527.9 297.0 L527.8 296.2 L527.3 295.4 L526.6 294.7 L525.7 294.0 L524.5 293.5 L523.1 293.1 L521.7 292.9 L520.2 292.8 L518.6 292.9 L517.2 293.1 L515.8 293.5 L514.6 294.0 L513.6 294.7 L512.9 295.4 Z M505.3 317.4 L504.8 318.2 L504.7 319.0 L504.8 319.8 L505.3 320.6 L506.0 321.3 L506.9 321.9 L508.1 322.4 L509.5 322.8 L510.9 323.1 L512.4 323.1 L514.0 323.1 L515.4 322.8 L516.8 322.4 L518.0 321.9 L519.0 321.3 L519.7 320.6 L527.3 311.0 L527.8 310.2 L527.9 309.4 L527.8 308.6 L527.3 307.8 L526.6 307.1 L525.7 306.4 L524.5 305.9 L523.1 305.5 L521.7 305.3 L520.2 305.2 L518.6 305.3 L517.2 305.5 L515.8 305.9 L514.6 306.4 L513.6 307.1 L512.9 307.8 Z M474.0 375.4 L473.5 376.3 L473.3 377.2 L473.5 378.1 L474.0 379.0 L474.8 379.8 L475.8 380.5 L477.2 381.1 L478.7 381.6 L480.3 381.8 L482.0 381.9 L483.8 381.8 L485.4 381.6 L486.9 381.1 L488.3 380.5 L489.4 379.8 L490.2 379.0 L494.0 374.2 L494.5 373.4 L494.7 372.4 L494.5 371.5 L494.0 370.7 L493.2 369.8 L492.2 369.1 L490.8 368.5 L489.3 368.1 L487.7 367.8 L486.0 367.8 L484.2 367.8 L482.6 368.1 L481.1 368.5 L479.7 369.1 L478.6 369.8 L477.8 370.6 Z" fill="none" stroke="#e0c020" stroke-width="0.6"/>
<path d="M462.3 357.1 L461.0 359.3 L460.6 361.5 L461.0 363.7 L462.2 365.9 L464.1 367.9 L466.8 369.6 L470.0 371.0 L473.7 372.1 L477.8 372.7 L482.0 373.0 L486.1 372.7 L490.2 372.1 L493.9 371.0 L497.2 369.6 L499.9 367.9 L501.9 365.9 L536.1 322.7 L537.4 320.6 L537.8 318.3 L537.4 316.1 L536.2 314.0 L534.3 312.0 L531.6 310.2 L528.4 308.8 L524.7 307.8 L520.6 307.1 L516.4 306.9 L512.3 307.1 L508.2 307.7 L504.5 308.8 L501.2 310.2 L498.5 311.9 L496.5 313.9 Z" fill="none" stroke="#30b080" stroke-width="0.6"/>
<path d="M504.4 299.7 L466.4 347.7 L470.9 348.7" fill="none" stroke="#d03020" stroke-width="0.6"/>
<path d="M550.4 135.9h4.600M550.4 144.2h4.600M550.4 156.1h4.600M550.4 164.4h4.600M550.4 176.2h4.600M550.4 184.5h4.600M550.4 196.4h4.600M550.4 204.7h4.600M550.4 216.5h4.600M550.4 224.8h4.600M550.4 236.7h4.600M550.4 245.0h4.600M584.1 143.6h4.600M584.1 151.9h4.600M584.1 163.8h4.600M584.1 172.1h4.600M584.1 183.9h4.600M584.1 192.2h4.600M584.1 204.1h4.600M584.1 212.4h4.600M584.1 224.2h4.600M584.1 232.5h4.600M584.1 244.4h4.600M584.1 252.7h4.600M617.9 151.6h4.600M617.9 159.9h4.600M617.9 171.8h4.600M617.9 180.1h4.600M617.9 191.9h4.600M617.9 200.2h4.600M617.9 212.1h4.600M617.9 220.4h4.600M617.9 232.2h4.600M617.9 240.5h4.600M617.9 252.4h4.600M617.9 260.7h4.600M651.6 159.6h4.600M651.6 167.9h4.600M651.6 179.8h4.600M651.6 188.1h4.600M651.6 199.9h4.600M651.6 208.2h4.600M651.6 220.1h4.600M651.6 228.4h4.600M651.6 240.2h4.600M651.6 248.5h4.600M651.6 260.4h4.600M651.6 268.7h4.600M685.5 167.6h4.600M685.5 175.9h4.600M685.5 187.8h4.600M685.5 196.1h4.600M685.5 207.9h4.600M685.5 216.2h4.600M685.5 228.1h4.600M685.5 236.4h4.600M685.5 248.2h4.600M685.5 256.5h4.600M685.5 268.4h4.600M685.5 276.7h4.600M622.4 152.4h4.600M622.4 160.7h4.600M622.4 172.6h4.600M622.4 180.9h4.600M622.4 192.7h4.600M622.4 201.0h4.600M622.4 212.9h4.600M622.4 221.2h4.600M622.4 233.0h4.600M622.4 241.3h4.600M622.4 253.2h4.600M622.4 261.5h4.600M625.9 277.1h4.600M625.9 285.6h4.600M625.9 297.4h4.600M625.9 305.9h4.600M625.9 317.7h4.600M625.9 326.2h4.600M625.9 338.0h4.600M625.9 346.5h4.600M625.9 358.3h4.600M625.9 366.8h4.600M625.9 378.6h4.600M625.9 387.1h4.600M625.9 398.9h4.600M625.9 407.4h4.600M625.9 419.2h4.600M625.9 427.7h4.600M630.1 277.6h4.600M630.1 297.9h4.600M630.1 318.2h4.600M531.3 54.1h4.600M531.3 62.4h4.600M676.8 87.6h4.600M676.8 96.2h4.600" fill="none" stroke="#e04828" stroke-width="0.9"/>
<path d="M550.6 136.1l-3.300 2.800M550.6 144.4l-3.300 2.800M550.6 156.3l-3.300 2.800M550.6 164.6l-3.300 2.800M550.6 176.4l-3.300 2.800M550.6 184.7l-3.300 2.800M550.6 196.6l-3.300 2.800M550.6 204.9l-3.300 2.800M550.6 216.7l-3.300 2.800M550.6 225.0l-3.300 2.800M550.6 236.9l-3.300 2.800M550.6 245.2l-3.300 2.800M584.3 143.8l-3.300 2.800M584.3 152.1l-3.300 2.800M584.3 164.0l-3.300 2.800M584.3 172.3l-3.300 2.800M584.3 184.1l-3.300 2.800M584.3 192.4l-3.300 2.800M584.3 204.2l-3.300 2.800M584.3 212.6l-3.300 2.800M584.3 224.4l-3.300 2.800M584.3 232.7l-3.300 2.800M584.3 244.6l-3.300 2.800M584.3 252.9l-3.300 2.800M618.1 151.8l-3.300 2.800M618.1 160.1l-3.300 2.800M618.1 172.0l-3.300 2.800M618.1 180.3l-3.300 2.800M618.1 192.1l-3.300 2.800M618.1 200.4l-3.300 2.800M618.1 212.2l-3.300 2.800M618.1 220.6l-3.300 2.800M618.1 232.4l-3.300 2.800M618.1 240.7l-3.300 2.800M618.1 252.6l-3.300 2.800M618.1 260.9l-3.300 2.800M651.8 159.8l-3.300 2.800M651.8 168.1l-3.300 2.800M651.8 180.0l-3.300 2.800M651.8 188.3l-3.300 2.800M651.8 200.1l-3.300 2.800M651.8 208.4l-3.300 2.800M651.8 220.2l-3.300 2.800M651.8 228.6l-3.300 2.800M651.8 240.4l-3.300 2.800M651.8 248.7l-3.300 2.800M651.8 260.6l-3.300 2.800M651.8 268.9l-3.300 2.800M685.7 167.8l-3.300 2.800M685.7 176.1l-3.300 2.800M685.7 188.0l-3.300 2.800M685.7 196.3l-3.300 2.800M685.7 208.1l-3.300 2.800M685.7 216.4l-3.300 2.800M685.7 228.2l-3.300 2.800M685.7 236.6l-3.300 2.800M685.7 248.4l-3.300 2.800M685.7 256.7l-3.300 2.800M685.7 268.6l-3.300 2.800M685.7 276.9l-3.300 2.800M622.6 152.6l-3.300 2.800M622.6 160.9l-3.300 2.800M622.6 172.8l-3.300 2.800M622.6 181.1l-3.300 2.800M622.6 192.9l-3.300 2.800M622.6 201.2l-3.300 2.800M622.6 213.1l-3.300 2.800M622.6 221.3l-3.300 2.800M622.6 233.2l-3.300 2.800M622.6 241.5l-3.300 2.800M622.6 253.4l-3.300 2.800M622.6 261.7l-3.300 2.800M626.1 277.3l-3.300 2.800M626.1 285.8l-3.300 2.800M626.1 297.6l-3.300 2.800M626.1 306.1l-3.300 2.800M626.1 317.9l-3.300 2.800M626.1 326.4l-3.300 2.800M626.1 338.2l-3.300 2.800M626.1 346.7l-3.300 2.800M626.1 358.5l-3.300 2.800M626.1 367.0l-3.300 2.800M626.1 378.8l-3.300 2.800M626.1 387.3l-3.300 2.800M626.1 399.1l-3.300 2.800M626.1 407.6l-3.300 2.800M626.1 419.4l-3.300 2.800M626.1 427.9l-3.300 2.800M630.3 277.8l-3.300 2.800M630.3 298.1l-3.300 2.800M630.3 318.4l-3.300 2.800M531.5 54.3l-3.300 2.800M531.5 62.6l-3.300 2.800M677.0 87.8l-3.300 2.800M677.0 96.4l-3.300 2.800" fill="none" stroke="#e8c820" stroke-width="0.9"/>
<path d="M547.3 138.9l-4.300 2.800M547.3 147.2l-4.300 2.800M547.3 159.1l-4.300 2.800M547.3 167.4l-4.300 2.800M547.3 179.2l-4.300 2.800M547.3 187.5l-4.300 2.800M547.3 199.4l-4.300 2.800M547.3 207.7l-4.300 2.800M547.3 219.5l-4.300 2.800M547.3 227.8l-4.300 2.800M547.3 239.7l-4.300 2.800M547.3 248.0l-4.300 2.800M581.0 146.6l-4.300 2.800M581.0 154.9l-4.300 2.800M581.0 166.8l-4.300 2.800M581.0 175.1l-4.300 2.800M581.0 186.9l-4.300 2.800M581.0 195.2l-4.300 2.800M581.0 207.1l-4.300 2.800M581.0 215.4l-4.300 2.800M581.0 227.2l-4.300 2.800M581.0 235.5l-4.300 2.800M581.0 247.4l-4.300 2.800M581.0 255.7l-4.300 2.800M614.8 154.6l-4.300 2.800M614.8 162.9l-4.300 2.800M614.8 174.8l-4.300 2.800M614.8 183.1l-4.300 2.800M614.8 194.9l-4.300 2.800M614.8 203.2l-4.300 2.800M614.8 215.1l-4.300 2.800M614.8 223.4l-4.300 2.800M614.8 235.2l-4.300 2.800M614.8 243.5l-4.300 2.800M614.8 255.4l-4.300 2.800M614.8 263.7l-4.300 2.800M648.5 162.6l-4.300 2.800M648.5 170.9l-4.300 2.800M648.5 182.8l-4.300 2.800M648.5 191.1l-4.300 2.800M648.5 202.9l-4.300 2.800M648.5 211.2l-4.300 2.800M648.5 223.1l-4.300 2.800M648.5 231.4l-4.300 2.800M648.5 243.2l-4.300 2.800M648.5 251.5l-4.300 2.800M648.5 263.4l-4.300 2.800M648.5 271.7l-4.300 2.800M682.4 170.6l-4.300 2.800M682.4 178.9l-4.300 2.800M682.4 190.8l-4.300 2.800M682.4 199.1l-4.300 2.800M682.4 210.9l-4.300 2.800M682.4 219.2l-4.300 2.800M682.4 231.1l-4.300 2.800M682.4 239.4l-4.300 2.800M682.4 251.2l-4.300 2.800M682.4 259.5l-4.300 2.800M682.4 271.4l-4.300 2.800M682.4 279.7l-4.300 2.800M619.3 155.4l-4.300 2.800M619.3 163.7l-4.300 2.800M619.3 175.6l-4.300 2.800M619.3 183.9l-4.300 2.800M619.3 195.7l-4.300 2.800M619.3 204.0l-4.300 2.800M619.3 215.9l-4.300 2.800M619.3 224.2l-4.300 2.800M619.3 236.0l-4.300 2.800M619.3 244.3l-4.300 2.800M619.3 256.2l-4.300 2.800M619.3 264.5l-4.300 2.800M622.8 280.1l-4.300 2.800M622.8 288.6l-4.300 2.800M622.8 300.4l-4.300 2.800M622.8 308.9l-4.300 2.800M622.8 320.7l-4.300 2.800M622.8 329.2l-4.300 2.800M622.8 341.0l-4.300 2.800M622.8 349.5l-4.300 2.800M622.8 361.3l-4.300 2.800M622.8 369.8l-4.300 2.800M622.8 381.6l-4.300 2.800M622.8 390.1l-4.300 2.800M622.8 401.9l-4.300 2.800M622.8 410.4l-4.300 2.800M622.8 422.2l-4.300 2.800M622.8 430.7l-4.300 2.800M627.0 280.6l-4.300 2.800M627.0 300.9l-4.300 2.800M627.0 321.2l-4.300 2.800M528.2 57.1l-4.300 2.800M528.2 65.4l-4.300 2.800M673.7 90.6l-4.300 2.800M673.7 99.2l-4.300 2.800" fill="none" stroke="#40c020" stroke-width="0.9"/>
<g class="f"><text x="546.3" y="138.3">F</text><text x="546.3" y="146.6">F</text><text x="546.3" y="158.5">F</text><text x="546.3" y="166.8">F</text><text x="546.3" y="178.6">F</text><text x="546.3" y="186.9">F</text><text x="546.3" y="198.8">F</text><text x="546.3" y="207.1">F</text><text x="546.3" y="218.9">F</text><text x="546.3" y="227.2">F</text><text x="546.3" y="239.1">F</text><text x="546.3" y="247.4">F</text><text x="580.0" y="146.0">F</text><text x="580.0" y="154.3">F</text><text x="580.0" y="166.2">F</text><text x="580.0" y="174.5">F</text><text x="580.0" y="186.3">F</text><text x="580.0" y="194.6">F</text><text x="580.0" y="206.4">F</text><text x="580.0" y="214.8">F</text><text x="580.0" y="226.6">F</text><text x="580.0" y="234.9">F</text><text x="580.0" y="246.8">F</text><text x="580.0" y="255.1">F</text><text x="613.8" y="154.0">F</text><text x="613.8" y="162.3">F</text><text x="613.8" y="174.2">F</text><text x="613.8" y="182.5">F</text><text x="613.8" y="194.3">F</text><text x="613.8" y="202.6">F</text><text x="613.8" y="214.4">F</text><text x="613.8" y="222.8">F</text><text x="613.8" y="234.6">F</text><text x="613.8" y="242.9">F</text><text x="613.8" y="254.8">F</text><text x="613.8" y="263.1">F</text><text x="647.5" y="162.0">F</text><text x="647.5" y="170.3">F</text><text x="647.5" y="182.2">F</text><text x="647.5" y="190.5">F</text><text x="647.5" y="202.3">F</text><text x="647.5" y="210.6">F</text><text x="647.5" y="222.4">F</text><text x="647.5" y="230.8">F</text><text x="647.5" y="242.6">F</text><text x="647.5" y="250.9">F</text><text x="647.5" y="262.8">F</text><text x="647.5" y="271.1">F</text><text x="681.4" y="170.0">F</text><text x="681.4" y="178.3">F</text><text x="681.4" y="190.2">F</text><text x="681.4" y="198.5">F</text><text x="681.4" y="210.3">F</text><text x="681.4" y="218.6">F</text><text x="681.4" y="230.4">F</text><text x="681.4" y="238.8">F</text><text x="681.4" y="250.6">F</text><text x="681.4" y="258.9">F</text><text x="681.4" y="270.8">F</text><text x="681.4" y="279.1">F</text><text x="618.3" y="154.8">F</text><text x="618.3" y="163.1">F</text><text x="618.3" y="175.0">F</text><text x="618.3" y="183.2">F</text><text x="618.3" y="195.1">F</text><text x="618.3" y="203.4">F</text><text x="618.3" y="215.2">F</text><text x="618.3" y="223.5">F</text><text x="618.3" y="235.4">F</text><text x="618.3" y="243.7">F</text><text x="618.3" y="255.6">F</text><text x="618.3" y="263.9">F</text><text x="621.8" y="279.5">F</text><text x="621.8" y="288.0">F</text><text x="621.8" y="299.8">F</text><text x="621.8" y="308.3">F</text><text x="621.8" y="320.1">F</text><text x="621.8" y="328.6">F</text><text x="621.8" y="340.4">F</text><text x="621.8" y="348.9">F</text><text x="621.8" y="360.7">F</text><text x="621.8" y="369.2">F</text><text x="621.8" y="381.0">F</text><text x="621.8" y="389.5">F</text><text x="621.8" y="401.3">F</text><text x="621.8" y="409.8">F</text><text x="621.8" y="421.6">F</text><text x="621.8" y="430.1">F</text><text x="626.0" y="280.0">F</text><text x="626.0" y="300.3">F</text><text x="626.0" y="320.6">F</text><text x="527.2" y="56.5">F</text><text x="527.2" y="64.8">F</text><text x="672.7" y="90.0">F</text><text x="672.7" y="98.6">F</text><text x="503.0" y="335.5" style="font-size:5.600px;stroke-width:1.200px">F</text><text x="503.0" y="343.0" style="font-size:5.600px;stroke-width:1.200px">F</text></g>
<g transform="translate(452,127.8)"><circle r="4.6" fill="#fff" fill-opacity="0.9"/><path d="M0 0 L-4.6 0 A4.6 4.6 0 0 1 0 -4.6 Z M0 0 L4.6 0 A4.6 4.6 0 0 1 0 4.6 Z" fill="#3548a8"/></g>
<g transform="translate(598,309)" stroke="#7060c0" stroke-width="0.9" opacity="0.8"><path d="M-4 0H4M0 -5V5"/></g>
<circle cx="480" cy="270.4" r="93.5" fill="none" stroke="#00ffff" stroke-width="3"/><polygon points="443.3,226 443.3,314 533,270" fill="#00ffff"/>
</svg>
<div id="status"></div>
<div class="st" style="left:553px">X =51.999</div><div class="st" style="left:600.5px">Y =54.276</div><div class="abs" style="left:550px;top:522px;width:1px;height:15px;background:#d8d8d8"></div><div class="abs" style="left:597px;top:522px;width:1px;height:15px;background:#d8d8d8"></div><div class="abs" style="left:648px;top:524.5px;width:14px;height:12px;background:#cfcfd6;border:1px solid #b0b0b8"></div><div class="cb" style="left:666px"></div><div class="combo" style="left:678px;width:93px"></div><div class="st" style="left:693.5px;font-size:7px">#1 : REFERENCE</div><div class="cb" style="left:775px"></div><div class="abs" style="left:786.5px;top:524.5px;width:22px;height:12.5px;background:#e2e2e2;border:1px solid #aaa"></div><div class="abs" style="left:788.5px;top:526px;width:11.5px;height:10px;background:#ff22ff"></div><div class="abs" style="left:802.5px;top:530px;width:0;height:0;border-left:2.5px solid transparent;border-right:2.5px solid transparent;border-top:3px solid #111"></div><div class="cb" style="left:812.5px"></div><div class="combo" style="left:825px;width:93px"></div><div class="st" style="left:840px;font-size:7px">LAYER :  1</div><div class="abs" style="left:923px;top:524px;width:14.5px;height:13px;background:#e4e4e4;border:1px solid #bbb"></div><div class="abs" style="left:940.5px;top:524px;width:17px;height:13px;background:#b2b2b2"></div><div class="abs" style="left:0;top:538.6px;width:960px;height:1.4px;background:#222"></div><div class="abs" style="left:30px;top:538.6px;width:215px;height:1.4px;background:#bdbdbd"></div>
<svg class="abs" style="left:0;top:0;z-index:5" width="960" height="540" viewBox="0 0 960 540">
<!-- app icon -->
<rect x="1.2" y="1.5" width="9.6" height="10.5" rx="1.5" fill="#fff" stroke="#a01830" stroke-width="1.3"/>
<path d="M3.3 4.6h5.2v2.2h-5v2.6h5.4" fill="none" stroke="#a01830" stroke-width="1.1"/>
<!-- window controls -->
<path d="M882.500 6.600h6.200" stroke="#a8a8a8" stroke-width="0.8"/>
<rect x="911" y="5.5" width="5.5" height="5" fill="none" stroke="#888" stroke-width="0.8"/><path d="M912.5 5.5v-1.3h5.5v5h-1.5" fill="none" stroke="#888" stroke-width="0.7"/>
<path d="M941.300 4l5.800 5.800M947.100 4l-5.800 5.800" stroke="#999" stroke-width="0.8"/>
<!-- tab icons: Design pencil -->
<g>
<path d="M13 36.5l2-1.5 7.2 8.6-0.5 2.2-2.3-.2z" fill="#f2c230" stroke="#a07818" stroke-width=".4"/>
<path d="M12.2 36.2l1.8-1.6 1.6 1.6-1.9 1.7z" fill="#e03a2a"/>
<path d="M21.8 37l-3.5 3.4M19.5 41.5l-1.8 3.8" stroke="#a06a50" stroke-width="1"/>
<path d="M21 43.8l1.2 1.8-1.9-.4z" fill="#444"/>
</g>
<!-- Milling icon -->
<g id="mill">
<path d="M57.5 39.5l3-2.5 7.5 1v4.5l-7 2.8-3.5-2.3z" fill="#f1c3a6"/>
<path d="M57.5 39.5l3.2 1.8v4l-3.2-2.3z" fill="#3a2a24"/>
<path d="M60.5 37l2.8-1.6 4.7 2.6-3 1.4z" fill="#b9a097"/>
<rect x="64" y="33.8" width="2.4" height="6.5" rx="1" fill="#d8dce2" stroke="#8a8e96" stroke-width=".4"/>
</g>
<!-- Opelists icon -->
<g>
<path d="M105.500 35.200h6l2.300 2.300v7.600h-8.300z" fill="#fdf6d8" stroke="#3a4ab0" stroke-width=".8"/>
<path d="M106.300 37.200h4.500M106.300 39.100h6.800M106.300 41h6.800M106.300 42.900h6.800" stroke="#d42a2a" stroke-width=".8"/><path d="M107.800 36.500v7.500" stroke="#f0d040" stroke-width=".8"/>
<path d="M111.5 35.2v2.3h2.3" fill="#fff" stroke="#3a4ab0" stroke-width=".5"/>
</g>
<!-- Machine icon -->
<g>
<rect x="156.5" y="35.5" width="3" height="9.5" fill="#ddd" stroke="#333" stroke-width=".6"/>
<rect x="159.5" y="36.5" width="5" height="5" fill="#fff" stroke="#222" stroke-width=".7"/>
<rect x="159.5" y="41.5" width="5.5" height="3.6" fill="#111"/>
<path d="M164.5 37.5l1.8 1.8 1-2" fill="none" stroke="#444" stroke-width=".6"/>
</g>
<!-- toolbar icons -->
<g id="tb1">
<path d="M10.800 58.800l8.200-1.300v5l-7 1.700-1.200-.400z" fill="#f5cdb2"/>
<path d="M9 58.300l1.800 .500v5l-1.800-1.800z" fill="#30221e"/>
<path d="M9 58.300l1.500-3h4.300l2.700 1.900-6.700 1.600z" fill="#e8303a"/>
<path d="M17.500 57.200l1.500 .300-8.200 1.300z" fill="#fbe3d2"/>
<rect x="14.900" y="52.300" width="2" height="5.800" rx=".9" fill="#eceff3" stroke="#8a8e96" stroke-width=".4"/><path d="M14.700 54v4.300" stroke="#333" stroke-width=".5"/>
</g>
<g>
<path d="M69.500 59.200l7-1.200v4.300l-6 1.500-1-.400z" fill="#d3b09e"/>
<path d="M67.800 60.500l1.700-1.300v4.200l-1.700-1z" fill="#30221e"/>
<path d="M68 59.300l.800-3.600h3.600l.600 3-3.500 .500z" fill="#ee2f3f"/>
<rect x="73.300" y="52.400" width="2.200" height="7" rx="1" fill="#eceff3" stroke="#8a8e96" stroke-width=".4"/><path d="M75.600 54v5.500" stroke="#333" stroke-width=".6"/>
</g>
<g>
<path d="M120 58.600l7.500-1v4.700l-5.600 2-1.900-.500z" fill="#f3c9b0"/>
<path d="M118.400 58.200l1.600 .400v5.200l-1.600-1.600z" fill="#30221e"/>
<path d="M118.400 58.200l1.800-2.600h3l1.200 1.700-4.400 1.300z" fill="#d8242f"/>
<rect x="125.200" y="57.600" width="2.300" height="5.600" fill="#e02838"/>
<rect x="123.700" y="52.300" width="1.900" height="5" rx=".9" fill="#eceff3" stroke="#8a8e96" stroke-width=".4"/><path d="M123.500 54v3.500" stroke="#333" stroke-width=".5"/>
</g>
<g fill="none" stroke="#a8705a" stroke-width=".7">
<ellipse cx="161.5" cy="58.3" rx="4" ry="6" transform="rotate(15 161.5 58.3)" fill="#ecd9cf"/>
<path d="M158.5 60.5c1-4 3-6 5.5-6.5M159.5 62.5c1.500-3.500 3.500-5.500 6-6.500M162 53.500c-1 3 0 6 1.500 9"/>
</g>
<g>
<path d="M207 58.2l3.4-3.8 6 1.600 2 3.300-6.400 4.300-4.600-2.200z" fill="#f0c4a6"/>
<path d="M207 58.200l3.400-3.800 5.600 1.500-3.600 4z" fill="#f2e060"/>
<path d="M207 58.200l4.800 2.400v3l-4.400-2.200z" fill="#30221e"/>
<rect x="214.300" y="52" width="2.400" height="6.800" rx="1" fill="#c8ccd2" stroke="#7a7e86" stroke-width=".4"/>
</g>
<path d="M253.600 52.600l1.900 1.300 1.900-1.300 1.900 1.300 1.800-1.300v9.600l-3.700 2.900-3.800-2.900z" fill="#4f6cc4"/>
<path d="M255.500 56h1.500v2h1.500v2.500h-2" fill="none" stroke="#9fb2e6" stroke-width=".6"/>
<!-- dropdown arrows -->
<path d="M148.300 66.300h3.200l-1.600 2zM199.800 66.300h3.200l-1.600 2zM244.600 66.300h3.200l-1.600 2z" fill="#777"/>
<path d="M269.200 83.300l2.500 2.500 2.500-2.500" fill="none" stroke="#555" stroke-width=".8"/>
<!-- search magnifier -->
<circle cx="115.600" cy="124.800" r="2.600" fill="none" stroke="#777" stroke-width=".8"/><path d="M117.500 126.800l3 3" stroke="#777" stroke-width=".9"/>
<g><path d="M20.500 135.500h2v5.500h-2zM22.500 136.500h4.500v3h-4.500z" fill="#fff" stroke="#222" stroke-width=".6"/><rect x="22.500" y="139.500" width="5" height="2.300" fill="#111"/><path d="M23.500 137.500l1.700 2.200 2.800-5" fill="none" stroke="#e01828" stroke-width="1.100"/></g>
<g><circle cx="24" cy="148" r="3.800" fill="#8a8f98"/><path d="M20.500 149.500c2 1.800 5 1.800 7 0" stroke="#555b66" stroke-width=".8" fill="none"/><path d="M21.500 148.500c1.500-2.500 3.500-3.800 6-4.200-1 1-1.800 2.200-2 3.500 1 .2 1.800-.2 2.400-.8" fill="none" stroke="#f08a1c" stroke-width="1.200"/></g>
<g><path d="M20 156.500l3-2 5 1.200v3.300l-3.200 2.300-4.800-1.500z" fill="#9a9a9a"/><path d="M20 156.500l3-2 5 1.200-3.200 1.900z" fill="#c8c8c8"/><path d="M24.800 157.600l3.200-1.900v3.300l-3.200 2.300z" fill="#6e6e6e"/></g>
<g><path d="M20 166l2.500-2.200 5 .8v3.400l-4.800 1.900-2.700-1.600z" fill="#eec3aa"/><path d="M20 166l2.600 1.300v2.600l-2.600-1.600z" fill="#3a2a24"/><rect x="24.600" y="161.800" width="1.900" height="4.600" rx=".8" fill="#cfd3da" stroke="#8a8e96" stroke-width=".3"/></g>
<g transform="translate(29.5,175.0) scale(1.08)"><path d="M0 0l2.600-2.800 5.400 1.100v3.300l-4.600 2-3.400-1.300z" fill="#d8202c"/><path d="M0 0l3.300 1.200v2.400l-3.300-1.300z" fill="#7a1018"/><path d="M2.600-2.800l5.400 1.100-1.300.8-4.600-.8z" fill="#f4a0a0"/><path d="M3.900 1.300l1.500-1.300 1.700.3-.1 1.400-1.500 1z" fill="#fff" fill-opacity=".85"/></g>
<g transform="translate(29.5,184.0) scale(1.08)"><path d="M0 0l2.600-2.800 5.400 1.100v3.300l-4.600 2-3.400-1.300z" fill="#d8202c"/><path d="M0 0l3.300 1.200v2.400l-3.300-1.300z" fill="#7a1018"/><path d="M2.600-2.800l5.400 1.100-1.300.8-4.600-.8z" fill="#f4a0a0"/><path d="M3.900 1.300l1.500-1.300 1.700.3-.1 1.400-1.500 1z" fill="#fff" fill-opacity=".85"/></g>
<g transform="translate(29.5,193.0) scale(1.08)"><path d="M0 0l2.600-2.800 5.400 1.100v3.300l-4.600 2-3.400-1.300z" fill="#d8202c"/><path d="M0 0l3.300 1.200v2.400l-3.300-1.300z" fill="#7a1018"/><path d="M2.600-2.800l5.400 1.100-1.300.8-4.600-.8z" fill="#f4a0a0"/><path d="M3.900 1.300l1.500-1.300 1.700.3-.1 1.400-1.500 1z" fill="#fff" fill-opacity=".85"/></g>
<g transform="translate(29.5,229.0) scale(1.08)"><path d="M0 0l2.600-2.800 5.400 1.100v3.300l-4.600 2-3.400-1.300z" fill="#d8202c"/><path d="M0 0l3.300 1.200v2.400l-3.300-1.300z" fill="#7a1018"/><path d="M2.600-2.800l5.400 1.100-1.300.8-4.600-.8z" fill="#f4a0a0"/><path d="M3.900 1.300l1.500-1.300 1.700.3-.1 1.400-1.500 1z" fill="#fff" fill-opacity=".85"/></g>
<g transform="translate(29.5,238.0) scale(1.08)"><path d="M0 0l2.600-2.800 5.400 1.100v3.300l-4.600 2-3.400-1.300z" fill="#d8202c"/><path d="M0 0l3.300 1.200v2.400l-3.300-1.300z" fill="#7a1018"/><path d="M2.600-2.800l5.400 1.100-1.300.8-4.600-.8z" fill="#f4a0a0"/><path d="M3.900 1.300l1.500-1.300 1.700.3-.1 1.400-1.500 1z" fill="#fff" fill-opacity=".85"/></g>
<g transform="translate(29.5,247.0) scale(1.08)"><path d="M0 0l2.600-2.800 5.400 1.100v3.300l-4.600 2-3.400-1.300z" fill="#d8202c"/><path d="M0 0l3.300 1.200v2.400l-3.300-1.300z" fill="#7a1018"/><path d="M2.600-2.800l5.400 1.100-1.300.8-4.600-.8z" fill="#f4a0a0"/><path d="M3.900 1.300l1.500-1.300 1.700.3-.1 1.400-1.500 1z" fill="#fff" fill-opacity=".85"/></g>
<g><path d="M39.200 201l2.200-2.200 4.800.9v4l-4 1.800-3-1.500z" fill="#f0c0a8"/><path d="M39.200 201l2.600 1.300v3.200l-2.600-1.500z" fill="#4a2a24"/><path d="M41.400 198.800l4.800.9-1.600 1-3.600-.6z" fill="#fbe0d2"/></g>
<g><rect x="40.300" y="207" width="5.400" height="7.400" fill="#e6e6e6" stroke="#333" stroke-width=".6"/><rect x="41.500" y="207" width="1.600" height="4.500" fill="#222"/><rect x="43.600" y="210.500" width="1.500" height="3.500" fill="#c8b400"/></g>
<rect x="39.400" y="216.800" width="6.800" height="6.400" fill="#f4ee44" stroke="#3a4ab0" stroke-width=".8"/>
<path d="M12.6 165.0l2 2 2-2" fill="none" stroke="#555" stroke-width=".7"/>
<path d="M22.0 192.3l2 2 2-2" fill="none" stroke="#555" stroke-width=".7"/>
<path d="M23.3 173.1l1.800 1.900-1.800 1.900" fill="none" stroke="#888" stroke-width=".7"/>
<path d="M23.3 182.1l1.800 1.900-1.800 1.900" fill="none" stroke="#888" stroke-width=".7"/>
<path d="M23.3 227.1l1.800 1.900-1.800 1.900" fill="none" stroke="#888" stroke-width=".7"/>
<path d="M23.3 236.1l1.800 1.900-1.800 1.900" fill="none" stroke="#888" stroke-width=".7"/>
<path d="M23.3 245.1l1.800 1.900-1.800 1.900" fill="none" stroke="#888" stroke-width=".7"/>
<g><path d="M139.300 110.500h2.500v8.500h-2.500z" fill="#9a9aa2"/><path d="M139.300 112h2.500M139.300 114h2.500M139.300 116h2.500" stroke="#666" stroke-width=".5"/><rect x="143.500" y="108" width="7.500" height="7.500" fill="#fff" stroke="#8890c0" stroke-width=".5"/><path d="M145.600 109.600v4.400l3.800-2.200z" fill="#4a4ab0"/></g>
<path d="M141 139.800l1.800 1.200 1.800-1.200 1.800 1.200 1.700-1.200v9.400l-3.500 2.800-3.600-2.800z" fill="#4f6cc4"/><path d="M143 143.500h1.500v2h1.500v2.500h-2" fill="none" stroke="#a9b9ea" stroke-width=".6"/>
<path d="M945 115h15M945 141.500h15" stroke="#f4f4f4" stroke-width="1"/>
<path d="M946.800 101h10.400l-3.900 4.600v4.300l-2.600-1.300v-3z" fill="#2f55cc"/>
<path d="M953.300 118.200l-5 4.300 5 4.300" fill="none" stroke="#3048b8" stroke-width="1.700"/>
<g><path d="M947 133l3.500-3 6 1.500v4l-3.500 3.300-6-1.800z" fill="#eab89e"/><path d="M947 133l3.500-3 6 1.500-3.500 2.800z" fill="#f8d8c6"/><path d="M953 134.300l3.500-2.800v4l-3.500 3.300z" fill="#b07860"/></g>
<path d="M953.300 144l-5 4.200 5 4.200" fill="none" stroke="#14994a" stroke-width="1.700"/>
<g><path d="M947 158.500l3-2.300 7 .8v4.300l-3 2.500-7-1z" fill="#555"/><path d="M947 158.500l3-2.300 7 .8-3 2.400z" fill="#9a9a9a"/><path d="M954 159.400l3-2.400v4.300l-3 2.500z" fill="#333"/></g>
<g fill="none" stroke="#2db82d" stroke-width="3"><path d="M841.300 40.800A5.300 5.300 0 0 0 834.200 35.400"/><path d="M830.700 40A5.300 5.300 0 0 0 837.800 45.400"/></g><path d="M829.800 37.600L832.600 32.400L836 39z" fill="#2db82d"/><path d="M842.200 43.200L839.400 48.400L836 41.800z" fill="#2db82d"/>
<g fill="#222"><path d="M849.300 35.600h2.900l-.1 9.600-1.300 .8c-1.100-2.600-1.900-5.600-1.500-10.400z"/><path d="M853.600 37h2.600l-1.300 8.600-.9 .4c-.5-3-.6-5.400-.4-9z"/><rect x="851" y="36.200" width="13.300" height="2.200"/><rect x="853.600" y="34.900" width="5.200" height="4.900"/><rect x="856.800" y="39.600" width="2.200" height="1.900"/><rect x="861.500" y="36.800" width="2.800" height="2.600" rx=".6"/></g>
<path d="M870 39.500l7-6.300v3.900c5 .2 8 3.300 7.500 10.400-1.500-4-3.500-5.400-7.500-5.400v3.900z" fill="#222"/>
<path d="M907.200 39.500l-7-6.300v3.900c-5 .2-8 3.300-7.500 10.400 1.500-4 3.500-5.400 7.500-5.400v3.900z" fill="#9a9a9a"/>
<circle cx="918" cy="39" r="5.300" fill="#fff" stroke="#222" stroke-width="1.500"/><path d="M922 43.300l5 5" stroke="#222" stroke-width="2.400" stroke-linecap="round"/><path d="M914.800 37.500a3.500 3.500 0 0 1 3-2" fill="none" stroke="#888" stroke-width=".7"/>
<rect x="933" y="31" width="19" height="19" fill="#f0a31c"/><g fill="none" stroke="#4a2c08" stroke-width="1.100"><path d="M935.500 41.500l2.500-6 1.500 1.300M949.500 41.500l-2.500-6-1.500 1.300"/><path d="M934.500 41.300h16"/></g><path d="M935.300 41.800h6.200v2.200c0 2-1.400 3-3.100 3s-3.100-1-3.100-3zM943.500 41.800h6.200v2.200c0 2-1.400 3-3.100 3s-3.100-1-3.100-3z" fill="#4a2c08"/>
<g fill="#222"><path d="M856 56.500c-4.500 0-7.500 3-7.500 6.500 0 3 2.500 4.500 4.500 3.800 1.500-.5 2 .5 1.800 1.700-.2 1.500 1.200 2.500 3.200 2 4-.8 6.500-4 6.500-7.500 0-3.800-3.500-6.500-8.500-6.500z"/><circle cx="853" cy="60" r="1.400" fill="#fff"/><circle cx="857.500" cy="59" r="1.400" fill="#fff"/><circle cx="861.500" cy="61.500" r="1.400" fill="#fff"/><circle cx="852" cy="68.500" r="2" /><path d="M849 57l14 13" stroke="#fff" stroke-width="2.200"/><path d="M849 57l14 13" stroke="#222" stroke-width="1.400"/><path d="M858 62l-7 7" stroke="#fff" stroke-width="2.200"/><path d="M860 60l-9.500 9.500" stroke="#222" stroke-width="1.200"/></g>
<g transform="rotate(-45 877.500 63.500)"><rect x="870.500" y="59.300" width="14" height="8.400" rx="1.800" fill="#222"/><rect x="878.800" y="60.400" width="4.800" height="6.200" rx="1" fill="#fff"/></g>
<g fill="#222"><path d="M894.500 62h11v1.800h-11z"/><path d="M896 64.500h8v6.500h-8z"/><path d="M896 66.300h8v1" fill="#fff"/><path d="M899.500 61l8.500-5.200.6 1-8.500 5.200z"/><path d="M895.500 56.500l.5 1.200 1.200.5-1.200.5-.5 1.200-.5-1.200-1.200-.5 1.200-.5zM899 55l.3.800.8.300-.8.300-.3.800-.3-.8-.8-.3.800-.3z"/></g>
<circle cx="918" cy="62.300" r="5.300" fill="#fff" stroke="#222" stroke-width="1.500"/><path d="M922 66.600l5 5" stroke="#222" stroke-width="2.400" stroke-linecap="round"/><path d="M915 61.300v-2h2M921 61.300v-2h-2M915 63.500v2h2M921 63.500v2h-2" fill="none" stroke="#777" stroke-width=".8"/>
<g fill="none" stroke="#222" stroke-width="1.300"><path d="M934.500 63.500c3-4.500 6-5.700 8.500-5.700s5.500 1.200 8.500 5.700c-3 4.500-6 5.700-8.500 5.700s-5.500-1.200-8.500-5.700z"/><circle cx="943" cy="63.500" r="2.800" fill="#222"/><path d="M937 57.300c1-1 2-1.600 3.200-2M949 69.700c-1 1-2 1.600-3.200 2" stroke-width="1"/></g><path d="M939.500 54l2.600 1.500-2.400 1.700zM946.500 73l-2.600-1.500 2.400-1.700z" fill="#222"/>
<path d="M946 371.500h3v49h-3M947.500 384h1.500M947.500 396h1.500M947.500 408h1.500" fill="none" stroke="#222" stroke-width="1.100"/>
<text x="929.300" y="426.300" font-size="6.600" fill="#333" textLength="20" lengthAdjust="spacingAndGlyphs">10 mm</text>
<path d="M909 470.500l-9 10.500" stroke="#b01818" stroke-width="2.400"/><circle cx="899" cy="482" r="4.800" fill="#c01a1a"/><circle cx="897.800" cy="480.600" r="1.600" fill="#e05a4a" fill-opacity=".7"/>
<path d="M909 470.500l21 4.600" stroke="#12a012" stroke-width="2.600"/><path d="M929 470l14 8-14 4.500z" fill="#14a814"/>
<path d="M909 471v-20" stroke="#08087a" stroke-width="2.800"/><path d="M903 452.500l6-12 6 12c-3 1.500-9 1.500-12 0z" fill="#0a0a96"/>
<text x="904.300" y="437.600" font-size="9.500" font-weight="bold" fill="#1a1ab8" textLength="7.500" lengthAdjust="spacingAndGlyphs">Z</text>
<text x="943.500" y="482.600" font-size="9.500" font-weight="bold" fill="#22cc22" textLength="7.500" lengthAdjust="spacingAndGlyphs">Y</text>
<text x="886.500" y="495" font-size="9.500" font-weight="bold" fill="#d01818" textLength="7.500" lengthAdjust="spacingAndGlyphs">X</text>
<g stroke="#5560a0" stroke-width=".5"><path d="M650.500 527h9M650.500 529.500h9M650.500 532h9M650.500 534.500h9M652 526v9.500M654.500 526v9.500M657 526v9.500M659.500 526v9.500" stroke-dasharray="1 .8"/></g><path d="M658.500 534l1.500 1.800 1.500-1.800z" fill="#222"/>
<g><rect x="681.500" y="527" width="9" height="7.500" fill="#7a86c8" stroke="#4a54a0" stroke-width=".6"/><rect x="683" y="528.500" width="6" height="5" fill="#aab4e4"/></g>
<path d="M763.500 529.500l2.500 2.500 2.500-2.500M910.500 529.500l2.500 2.500 2.500-2.500" fill="none" stroke="#444" stroke-width=".8"/>
<g fill="#444"><path d="M829.500 529l4-1.800 4 1.800-4 1.800z"/><path d="M829.500 531.300l4 1.800 4-1.800" fill="none" stroke="#444" stroke-width=".9"/></g>
<g fill="none" stroke="#4a54a0" stroke-width=".8"><path d="M926.500 528.300l4-2 4 2v4.700l-4 2-4-2z"/><path d="M926.500 528.300l4 2 4-2M930.500 530.300v4.700"/></g><path d="M934 535l1.500 1.800 1.500-1.800z" fill="#222"/>
<circle cx="949" cy="530.500" r="4.300" fill="#d8d8d8"/><text x="946.800" y="533.300" font-size="7.500" font-weight="bold" fill="#9a9a9a">?</text>
</svg>

</div></body></html>
